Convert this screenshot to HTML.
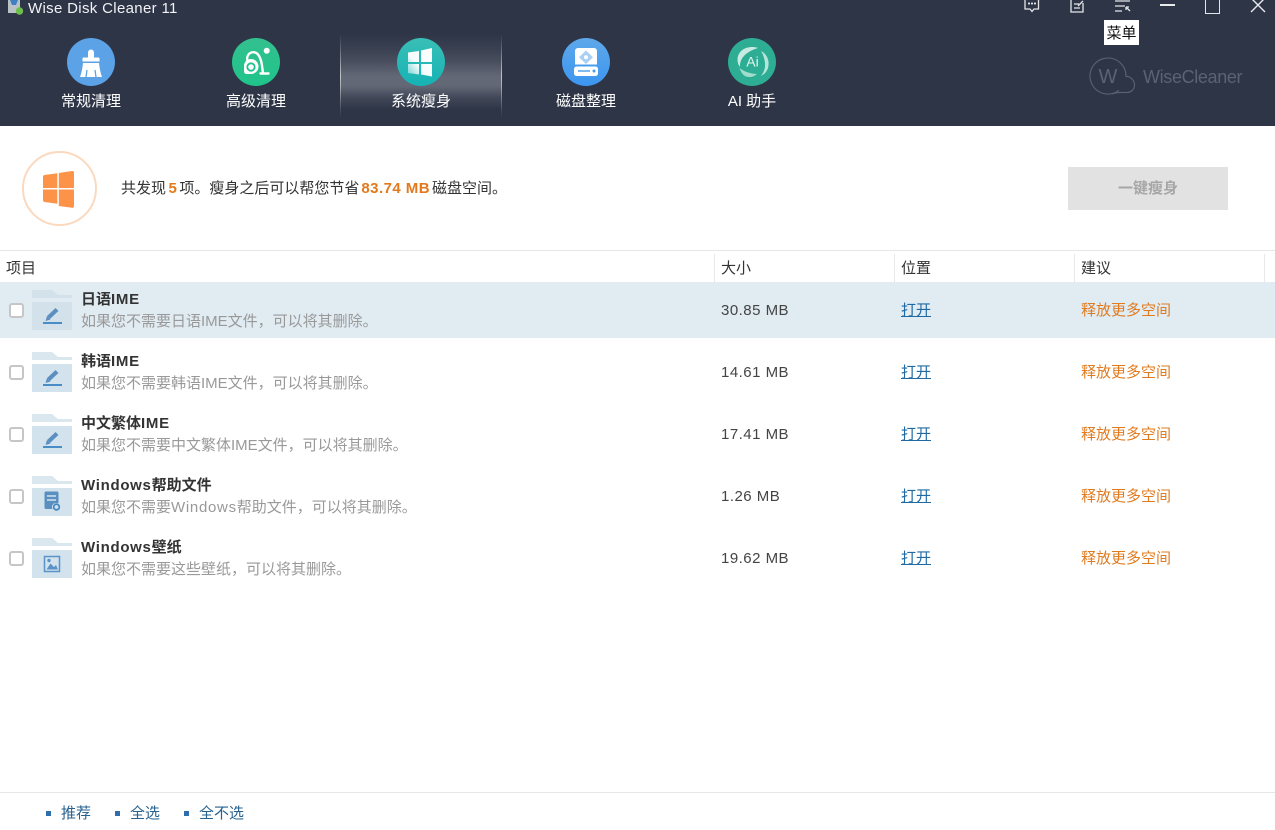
<!DOCTYPE html>
<html lang="zh">
<head>
<meta charset="utf-8">
<title>Wise Disk Cleaner 11</title>
<style>
html,body{margin:0;padding:0;background:#fff}
body{position:relative;width:1275px;height:830px;overflow:hidden;font-family:"Liberation Sans","Noto Sans CJK SC",sans-serif;font-size:15px;color:#333}
.a{position:absolute;white-space:nowrap}
.top{position:absolute;left:0;top:0;width:1275px;height:126px;background:#2e3547}
.active{position:absolute;left:340px;top:34px;width:162px;height:84px;background:linear-gradient(to bottom,rgba(255,255,255,0) 0%,rgba(255,255,255,.06) 18%,rgba(255,255,255,.12) 32%,rgba(255,255,255,.25) 50%,rgba(255,255,255,.25) 62%,rgba(255,255,255,.09) 76%,rgba(255,255,255,0) 90%)}
.edge{position:absolute;top:34px;width:1px;height:84px;background:linear-gradient(to bottom,rgba(255,255,255,0),rgba(255,255,255,.6) 50%,rgba(255,255,255,0))}
.nav{position:absolute;top:93px;width:120px;text-align:center;color:#fff;font-size:15px;line-height:18px}
.ic{position:absolute;top:38px;width:48px;height:48px}
.sep{position:absolute;top:254px;width:1px;height:28px;background:#e8e8e8}
.hd{position:absolute;top:260px;line-height:18px;font-size:15px;color:#333}
.cb{position:absolute;left:9px;width:11px;height:11px;border:2px solid #c6c6c6;border-radius:3px;background:#fff}
.t{position:absolute;left:81px;font-weight:bold;font-size:15px;line-height:18px;color:#333;white-space:nowrap}
.t span,.s span{letter-spacing:.7px}
.s{position:absolute;left:81px;font-size:15px;line-height:18px;color:#999;white-space:nowrap}
.sz{position:absolute;left:721px;font-size:15px;line-height:18px;color:#444;white-space:nowrap;letter-spacing:.48px}
.o{position:absolute;left:901px;font-size:15px;line-height:18px;color:#1f6aa5;text-decoration:underline}
.r{position:absolute;left:1081px;font-size:15px;line-height:18px;color:#e07b1f;white-space:nowrap}
.f{position:absolute;left:32px;width:40px;height:40px}
.d{position:absolute;top:811px;width:5px;height:5px;background:#2f6dab}
.l{position:absolute;top:805px;font-size:15px;line-height:18px;color:#27618f}
</style>
</head>
<body>
<div class="top"></div>
<div class="active"></div>
<div class="edge" style="left:340px"></div>
<div class="edge" style="left:501px"></div>

<svg class="a" style="left:7px;top:0" width="17" height="16" viewBox="0 0 17 16"><rect x="1" y="0" width="12" height="13" fill="#b9c2c4"/><path d="M3 0h8l-2 5H5z" fill="#3f7fc4"/><circle cx="12.500" cy="11" r="3.700" fill="#6cbf4b"/></svg>
<div class="a" style="left:28px;top:-1px;color:#f0f2f5;font-size:15px;line-height:19px;letter-spacing:.33px">Wise Disk Cleaner 11</div>

<svg class="ic" style="left:67px" viewBox="0 0 48 48"><circle cx="24" cy="24" r="24" fill="#5ba3e6"/><path d="M21 14.500a3 3 0 0 1 6 0V20h-6z" fill="#fff"/><path d="M16.500 19.500h15a1 1 0 0 1 1 1v3h-17v-3a1 1 0 0 1 1-1z" fill="#fff"/><path d="M16 25h16c.5 5 1.500 10 3 14H13c1.500-4 2.500-9 3-14z" fill="#fff"/><path d="M20 32l-1 7M28 32l1 7" stroke="#5ba3e6" stroke-width="1.300"/></svg>
<svg class="ic" style="left:232px" viewBox="0 0 48 48"><defs><linearGradient id="g2" x1="0" y1="0" x2="0" y2="1"><stop offset="0" stop-color="#33c08f"/><stop offset="1" stop-color="#1fc48b"/></linearGradient></defs><circle cx="24" cy="24" r="24" fill="url(#g2)"/><circle cx="34.700" cy="12.700" r="3" fill="#fff"/><path d="M15.500 23C13.500 15 22 11.500 26 16.500 30 21.500 30 29 31 35" fill="none" stroke="#fff" stroke-width="2.400"/><path d="M28.500 35.500h8" stroke="#fff" stroke-width="2.400" stroke-linecap="round"/><path d="M12 28c0-4 3-7 7-7a7.500 7.500 0 0 1 0 15h-4c-2 0-3-1-3-3z" fill="#fff"/><circle cx="19" cy="29" r="3.700" fill="#fff" stroke="#22c08c" stroke-width="1.800"/></svg>
<svg class="ic" style="left:397px" viewBox="0 0 48 48"><defs><linearGradient id="g3" x1="0" y1="0" x2="0" y2="1"><stop offset="0" stop-color="#39bfb6"/><stop offset="1" stop-color="#15b3b5"/></linearGradient><linearGradient id="w3" x1="1" y1="0" x2="0" y2="1"><stop offset="0" stop-color="#fff"/><stop offset=".6" stop-color="#fff" stop-opacity=".95"/><stop offset="1" stop-color="#fff" stop-opacity=".35"/></linearGradient></defs><circle cx="24" cy="24" r="24" fill="url(#g3)"/><path d="M11 14.500L22 13v11H11zM24 12.500L35 10v14H24zM11 26h11v10.500L11 35zM24 26h11v12.500L24 36.500z" fill="url(#w3)"/></svg>
<svg class="ic" style="left:562px" viewBox="0 0 48 48"><defs><linearGradient id="g4" x1="0" y1="0" x2="0" y2="1"><stop offset="0" stop-color="#5ea8ea"/><stop offset="1" stop-color="#3c96f0"/></linearGradient></defs><circle cx="24" cy="24" r="24" fill="url(#g4)"/><path d="M16 10h16a3 3 0 0 1 3 3v13.500H13V13a3 3 0 0 1 3-3z" fill="#fff"/><rect x="12" y="28.500" width="24" height="9.500" rx="2.500" fill="#fff"/><path d="M24 12.500l7 6.800-7 6.700-7-6.700z" fill="#a9cff5"/><circle cx="24" cy="19.300" r="2" fill="#fff"/><path d="M16 33h12" stroke="#4a9cec" stroke-width="1.400"/><circle cx="32" cy="33" r="1.500" fill="#4a9cec"/></svg>
<svg class="ic" style="left:728px" viewBox="0 0 48 48"><circle cx="24" cy="24" r="24" fill="#2dad93"/><path d="M30 10C21 7 10 11 9.500 21.500c0 3 .8 5.500 2.500 7.500-.5-8 5-15 18-19z" fill="#d9f2ea" opacity=".9"/><path d="M33 13c6 3 9 10 7 17-1 3-3 6-7 8 3-4 4.500-8 4-13-.5-4.500-2-9-4-12z" fill="#cfeee5" opacity=".85"/><path d="M11.500 30c4 3 9 5.500 17.500 6-3 3-8 4-12 2-3-2-4.500-5-5.500-8z" fill="#b5e4d6" opacity=".85"/><text x="24.500" y="28.500" text-anchor="middle" font-size="14" fill="#e3f5ef" font-family="Liberation Sans,sans-serif">Ai</text></svg>

<div class="nav" style="left:31px">常规清理</div>
<div class="nav" style="left:196px">高级清理</div>
<div class="nav" style="left:361px">系统瘦身</div>
<div class="nav" style="left:526px">磁盘整理</div>
<div class="nav" style="left:692px">AI 助手</div>

<svg class="a" style="left:1020px;top:0" width="130" height="16" viewBox="0 0 130 16" fill="none" stroke="#e4e6ea" stroke-width="1.300"><path d="M5 0v9h5l2 2.500L14 9h4.500V0"/><path d="M8 3.500h2M11 3.500h2M14 3.500h2" stroke-width="1.800"/><path d="M51 0v12h12V3M54 4h5M54 8h6M58 6l5-5"/><path d="M95 1h15M95 6h10M95 11h7M106 7l4 4M106 7v3M106 7h3"/></svg>
<div class="a" style="left:1160px;top:4px;width:15px;height:2px;background:#e8eaee"></div>
<div class="a" style="left:1205px;top:-3px;width:13px;height:15px;border:1.500px solid #e4e6ea;box-sizing:content-box"></div>
<svg class="a" style="left:1250px;top:0" width="16" height="13" viewBox="0 0 16 13" fill="none" stroke="#e8eaee" stroke-width="1.400"><path d="M1-2l14 14M15-2L1 12"/></svg>
<div class="a" style="left:1104px;top:20px;width:35px;height:25px;background:#fff;color:#111;font-size:15px;line-height:28px;text-align:center">菜单</div>

<svg class="a" style="left:1088px;top:56px" width="50" height="40" viewBox="0 0 50 40" fill="none" stroke="#5b6274" stroke-width="1.100"><path d="M31 34.300A18 18 0 1 1 38 20.500C42 20 46.500 24 46.500 29A7.500 7.500 0 0 1 39 36.500C34 36.500 28 36 24 38"/><text x="20" y="27" text-anchor="middle" font-size="20" fill="#5b6274" stroke="none" font-family="Liberation Sans,sans-serif">W</text></svg>
<div class="a" style="left:1143px;top:66px;font-size:18px;line-height:22px;color:#5b6274;letter-spacing:-.35px">WiseCleaner</div>

<div class="a" style="left:22px;top:151px;width:71px;height:71px;border:2px solid #fbd9bf;border-radius:50%"></div>
<svg class="a" style="left:42px;top:170px" width="33" height="39" viewBox="0 0 33 39"><path d="M1 7Q1 5.300 2.500 5L15.300 3.200V18H1zM16.800 3L30 1Q32 .8 32 2.800V18H16.800zM1 19.500h14.300V33.800L2.500 32Q1 31.700 1 30zM16.800 19.500H32V36q0 2-2 1.800L16.800 36z" fill="#fd9349"/></svg>

<div class="a" style="left:121px;top:180px;font-size:15px;line-height:18px;color:#333">共发现<b style="color:#e3791c;margin:0 2.500px">5</b>项。瘦身之后可以帮您节省<b style="color:#e3791c;margin:0 2px;letter-spacing:.45px">83.74 MB</b>磁盘空间。</div>
<div class="a" style="left:1068px;top:167px;width:160px;height:43px;background:#e2e2e2;color:#a6a6a6;font-size:15px;font-weight:bold;line-height:43px;text-align:center">一键瘦身</div>

<div class="a" style="left:0;top:250px;width:1275px;height:1px;background:#e6e6e6"></div>
<div class="hd" style="left:6px">项目</div>
<div class="sep" style="left:714px"></div><div class="hd" style="left:721px">大小</div>
<div class="sep" style="left:894px"></div><div class="hd" style="left:901px">位置</div>
<div class="sep" style="left:1074px"></div><div class="hd" style="left:1081px">建议</div>
<div class="sep" style="left:1264px"></div>

<div class="a" style="left:0;top:282px;width:1275px;height:56px;background:#e0ebf2"></div>

<div class="cb" style="top:303px"></div>
<svg class="f" style="top:290px" viewBox="0 0 40 40"><path d="M0 0h20l6 5h14v3H0z" fill="#d3e1ea"/><rect x="0" y="12" width="40" height="28" fill="#d3e1ea"/><path d="M16.500 27.500L25 19.500" stroke="#5b8fc0" stroke-width="4.200"/><path d="M13.500 31l1.500-5 3.500 3.500z" fill="#5b8fc0"/><path d="M11 33h19" stroke="#4a8cc6" stroke-width="2"/></svg>
<div class="t" style="top:291px">日语<span>IME</span></div>
<div class="s" style="top:313px">如果您不需要日语IME文件，可以将其删除。</div>
<div class="sz" style="top:302px">30.85 MB</div><div class="o" style="top:302px">打开</div><div class="r" style="top:302px">释放更多空间</div>

<div class="cb" style="top:365px"></div>
<svg class="f" style="top:352px" viewBox="0 0 40 40"><path d="M0 0h20l6 5h14v3H0z" fill="#dbe7ef"/><rect x="0" y="12" width="40" height="28" fill="#d3e3ee"/><path d="M16.500 27.500L25 19.500" stroke="#5b8fc0" stroke-width="4.200"/><path d="M13.500 31l1.500-5 3.500 3.500z" fill="#5b8fc0"/><path d="M11 33h19" stroke="#4a8cc6" stroke-width="2"/></svg>
<div class="t" style="top:353px">韩语<span>IME</span></div>
<div class="s" style="top:375px">如果您不需要韩语IME文件，可以将其删除。</div>
<div class="sz" style="top:364px">14.61 MB</div><div class="o" style="top:364px">打开</div><div class="r" style="top:364px">释放更多空间</div>

<div class="cb" style="top:427px"></div>
<svg class="f" style="top:414px" viewBox="0 0 40 40"><path d="M0 0h20l6 5h14v3H0z" fill="#dbe7ef"/><rect x="0" y="12" width="40" height="28" fill="#d3e3ee"/><path d="M16.500 27.500L25 19.500" stroke="#5b8fc0" stroke-width="4.200"/><path d="M13.500 31l1.500-5 3.500 3.500z" fill="#5b8fc0"/><path d="M11 33h19" stroke="#4a8cc6" stroke-width="2"/></svg>
<div class="t" style="top:415px">中文繁体<span>IME</span></div>
<div class="s" style="top:437px">如果您不需要中文繁体IME文件，可以将其删除。</div>
<div class="sz" style="top:426px">17.41 MB</div><div class="o" style="top:426px">打开</div><div class="r" style="top:426px">释放更多空间</div>

<div class="cb" style="top:489px"></div>
<svg class="f" style="top:476px" viewBox="0 0 40 40"><path d="M0 0h20l6 5h14v3H0z" fill="#dbe7ef"/><rect x="0" y="12" width="40" height="28" fill="#d3e3ee"/><path d="M14 15.500h11a1.500 1.500 0 0 1 1.500 1.500v10h-2.500a4 4 0 0 0-3.500 6H14a1.500 1.500 0 0 1-1.500-1.500V17a1.500 1.500 0 0 1 1.500-1.500z" fill="#5b8fc0"/><path d="M15 20h9M15 24h9" stroke="#d3e3ee" stroke-width="1.400"/><circle cx="24.500" cy="31" r="2.800" fill="none" stroke="#4a88c0" stroke-width="1.800"/></svg>
<div class="t" style="top:477px"><span>Windows</span>帮助文件</div>
<div class="s" style="top:499px">如果您不需要<span>Windows</span>帮助文件，可以将其删除。</div>
<div class="sz" style="top:488px">1.26 MB</div><div class="o" style="top:488px">打开</div><div class="r" style="top:488px">释放更多空间</div>

<div class="cb" style="top:551px"></div>
<svg class="f" style="top:538px" viewBox="0 0 40 40"><path d="M0 0h20l6 5h14v3H0z" fill="#dbe7ef"/><rect x="0" y="12" width="40" height="28" fill="#d3e3ee"/><rect x="12.500" y="18.500" width="15" height="15" fill="none" stroke="#5b93c9" stroke-width="1.500"/><path d="M14.500 31.500l4-6 3.500 3.500 2-2 2 4.500z" fill="#5b93c9"/><circle cx="17" cy="22.500" r="1.700" fill="#5b93c9"/></svg>
<div class="t" style="top:539px"><span>Windows</span>壁纸</div>
<div class="s" style="top:561px">如果您不需要这些壁纸，可以将其删除。</div>
<div class="sz" style="top:550px">19.62 MB</div><div class="o" style="top:550px">打开</div><div class="r" style="top:550px">释放更多空间</div>

<div class="a" style="left:0;top:792px;width:1275px;height:1px;background:#e6e6e6"></div>
<div class="d" style="left:46px"></div><div class="l" style="left:61px">推荐</div>
<div class="d" style="left:115px"></div><div class="l" style="left:130px">全选</div>
<div class="d" style="left:184px"></div><div class="l" style="left:199px">全不选</div>
</body>
</html>
